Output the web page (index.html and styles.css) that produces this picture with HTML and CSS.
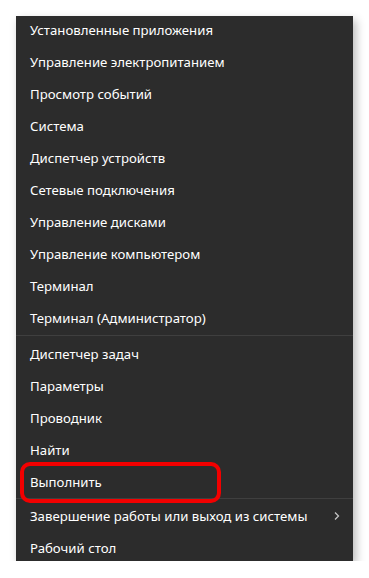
FILE: index.html
```html
<!DOCTYPE html>
<html lang="ru">
<head>
<meta charset="utf-8">
<title>Меню</title>
<link rel="stylesheet" href="styles.css">
</head>
<body>
<div class="menu">
  <ul class="group first">
    <li class="item">Установленные приложения</li>
    <li class="item">Управление электропитанием</li>
    <li class="item">Просмотр событий</li>
    <li class="item">Система</li>
    <li class="item">Диспетчер устройств</li>
    <li class="item">Сетевые подключения</li>
    <li class="item">Управление дисками</li>
    <li class="item">Управление компьютером</li>
    <li class="item">Терминал</li>
    <li class="item">Терминал (Администратор)</li>
  </ul>
  <div class="sep sep1"></div>
  <ul class="group">
    <li class="item">Диспетчер задач</li>
    <li class="item">Параметры</li>
    <li class="item">Проводник</li>
    <li class="item">Найти</li>
    <li class="item highlight">Выполнить</li>
  </ul>
  <div class="sep sep2"></div>
  <ul class="group">
    <li class="item sub">Завершение работы или выход из системы
      <svg class="chev" width="8" height="10" viewBox="0 0 8 10"><polyline points="2,1.5 5.5,5 2,8.5" fill="none" stroke="#c4c4c4" stroke-width="1.3"/></svg>
    </li>
    <li class="item">Рабочий стол</li>
  </ul>
</div>
</body>
</html>
```
FILE: styles.css
```css
html, body {
  margin: 0;
  padding: 0;
  background: #ffffff;
}
body {
  font-family: "Noto Sans", "Open Sans", sans-serif;
}
.menu {
  margin: 16px 0 0 16px;
  width: 337px;
  height: 545px;
  background: #2c2c2c;
  box-shadow: 3px 4px 9px rgba(0, 0, 0, 0.28);
  overflow: hidden;
  position: relative;
}
.group {
  list-style: none;
  margin: 0;
  padding: 0;
}
.group.first {
  margin-top: -2px;
}
.item {
  height: 32px;
  display: flex;
  align-items: center;
  padding-left: 14px;
  padding-right: 14px;
  color: #ffffff;
  font-size: 13.2px;
  white-space: nowrap;
  position: relative;
}
.sep {
  height: 1px;
  background: #3f3f3f;
}
.sep1 {
  margin: 1px 0 2px;
}
.sep2 {
  margin: 0 0 1px;
}
.sub {
  justify-content: space-between;
}
.chev {
  display: block;
  margin-right: -2px;
}
.highlight::after {
  content: "";
  position: absolute;
  left: 4px;
  top: -4px;
  width: 193px;
  height: 33px;
  border: 4px solid #f20000;
  border-radius: 10px;
}
```
